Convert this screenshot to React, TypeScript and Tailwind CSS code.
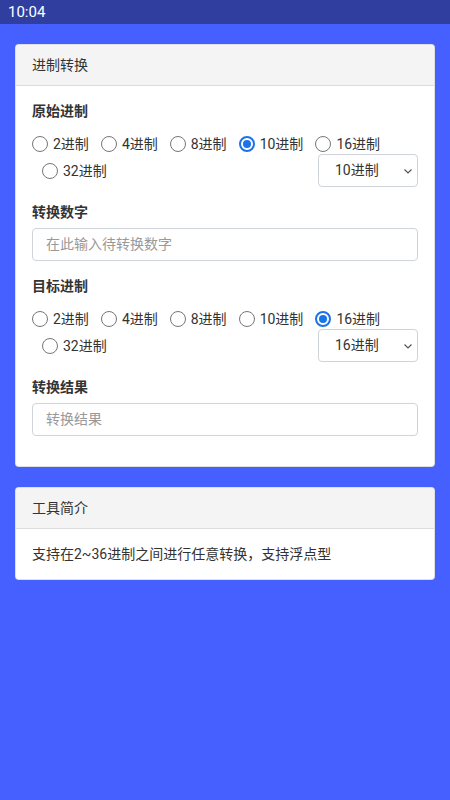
const BASES = ["2", "4", "8", "10", "16"];

function Radio({ label, checked }: { label: string; checked?: boolean }) {
  return (
    <label className="flex items-center gap-[5px]">
      {checked ? (
        <span className="flex h-4 w-4 items-center justify-center rounded-full border-2 border-[#1a73e8]">
          <span className="h-2 w-2 rounded-full bg-[#1a73e8]" />
        </span>
      ) : (
        <span className="h-4 w-4 rounded-full border border-[#767676]" />
      )}
      <span className="text-[14px] leading-[18px] text-[#333]">{label}</span>
    </label>
  );
}

function BasePicker({ value }: { value: string }) {
  return (
    <div>
      <div className="mt-[14px] flex h-[18px] items-center gap-3">
        {BASES.map((b) => (
          <Radio key={b} label={`${b}进制`} checked={b === value} />
        ))}
      </div>
      <div className="mt-px flex h-[33px] items-center justify-between">
        <div className="pl-[10px]">
          <Radio label="32进制" checked={value === "32"} />
        </div>
        <div className="flex h-[33px] w-[100px] items-center justify-between rounded border border-[#ced4da] bg-white pl-[16px] pr-[3px]">
          <span className="text-[14px] text-[#333]">{value}进制</span>
          <svg width="12" height="12" viewBox="0 0 12 12" fill="none" stroke="#555" strokeWidth="1.2">
            <path d="M2.5 4.5l3.5 3.5 3.5-3.5" />
          </svg>
        </div>
      </div>
    </div>
  );
}

function FieldLabel({ children }: { children: string }) {
  return <div className="mt-[15px] h-5 text-[14px] font-bold leading-5 text-[#333]">{children}</div>;
}

function TextBox({ placeholder }: { placeholder: string }) {
  return (
    <div className="mt-[6px] flex h-[33px] items-center rounded border border-[#ced4da] px-[13px]">
      <span className="text-[14px] text-[#999]">{placeholder}</span>
    </div>
  );
}

function Card({ title, children }: { title: string; children: React.ReactNode }) {
  return (
    <div className="overflow-hidden rounded border border-[rgba(0,0,0,0.125)] bg-white">
      <div className="flex h-[41px] items-center border-b border-[#dcdcdc] bg-[#f4f4f4] px-4 text-[14px] text-[#333]">
        {title}
      </div>
      {children}
    </div>
  );
}

export default function App() {
  return (
    <div
      className="flex min-h-[800px] flex-col bg-[#4560fe]"
      style={{ fontFamily: 'Roboto, "Noto Sans CJK SC", sans-serif' }}
    >
      <div className="flex h-6 items-center bg-[#303f9f] px-2 text-[15px] text-white">10:04</div>
      <div className="flex flex-col gap-5 px-[15px] pt-5">
        <Card title="进制转换">
          <div className="px-4 pb-[30px]">
            <FieldLabel>原始进制</FieldLabel>
            <BasePicker value="10" />
            <FieldLabel>转换数字</FieldLabel>
            <TextBox placeholder="在此输入待转换数字" />
            <FieldLabel>目标进制</FieldLabel>
            <BasePicker value="16" />
            <FieldLabel>转换结果</FieldLabel>
            <TextBox placeholder="转换结果" />
          </div>
        </Card>
        <Card title="工具简介">
          <div className="flex h-[50px] items-center px-4 text-[14px] text-[#333]">
            支持在2~36进制之间进行任意转换，支持浮点型
          </div>
        </Card>
      </div>
    </div>
  );
}
